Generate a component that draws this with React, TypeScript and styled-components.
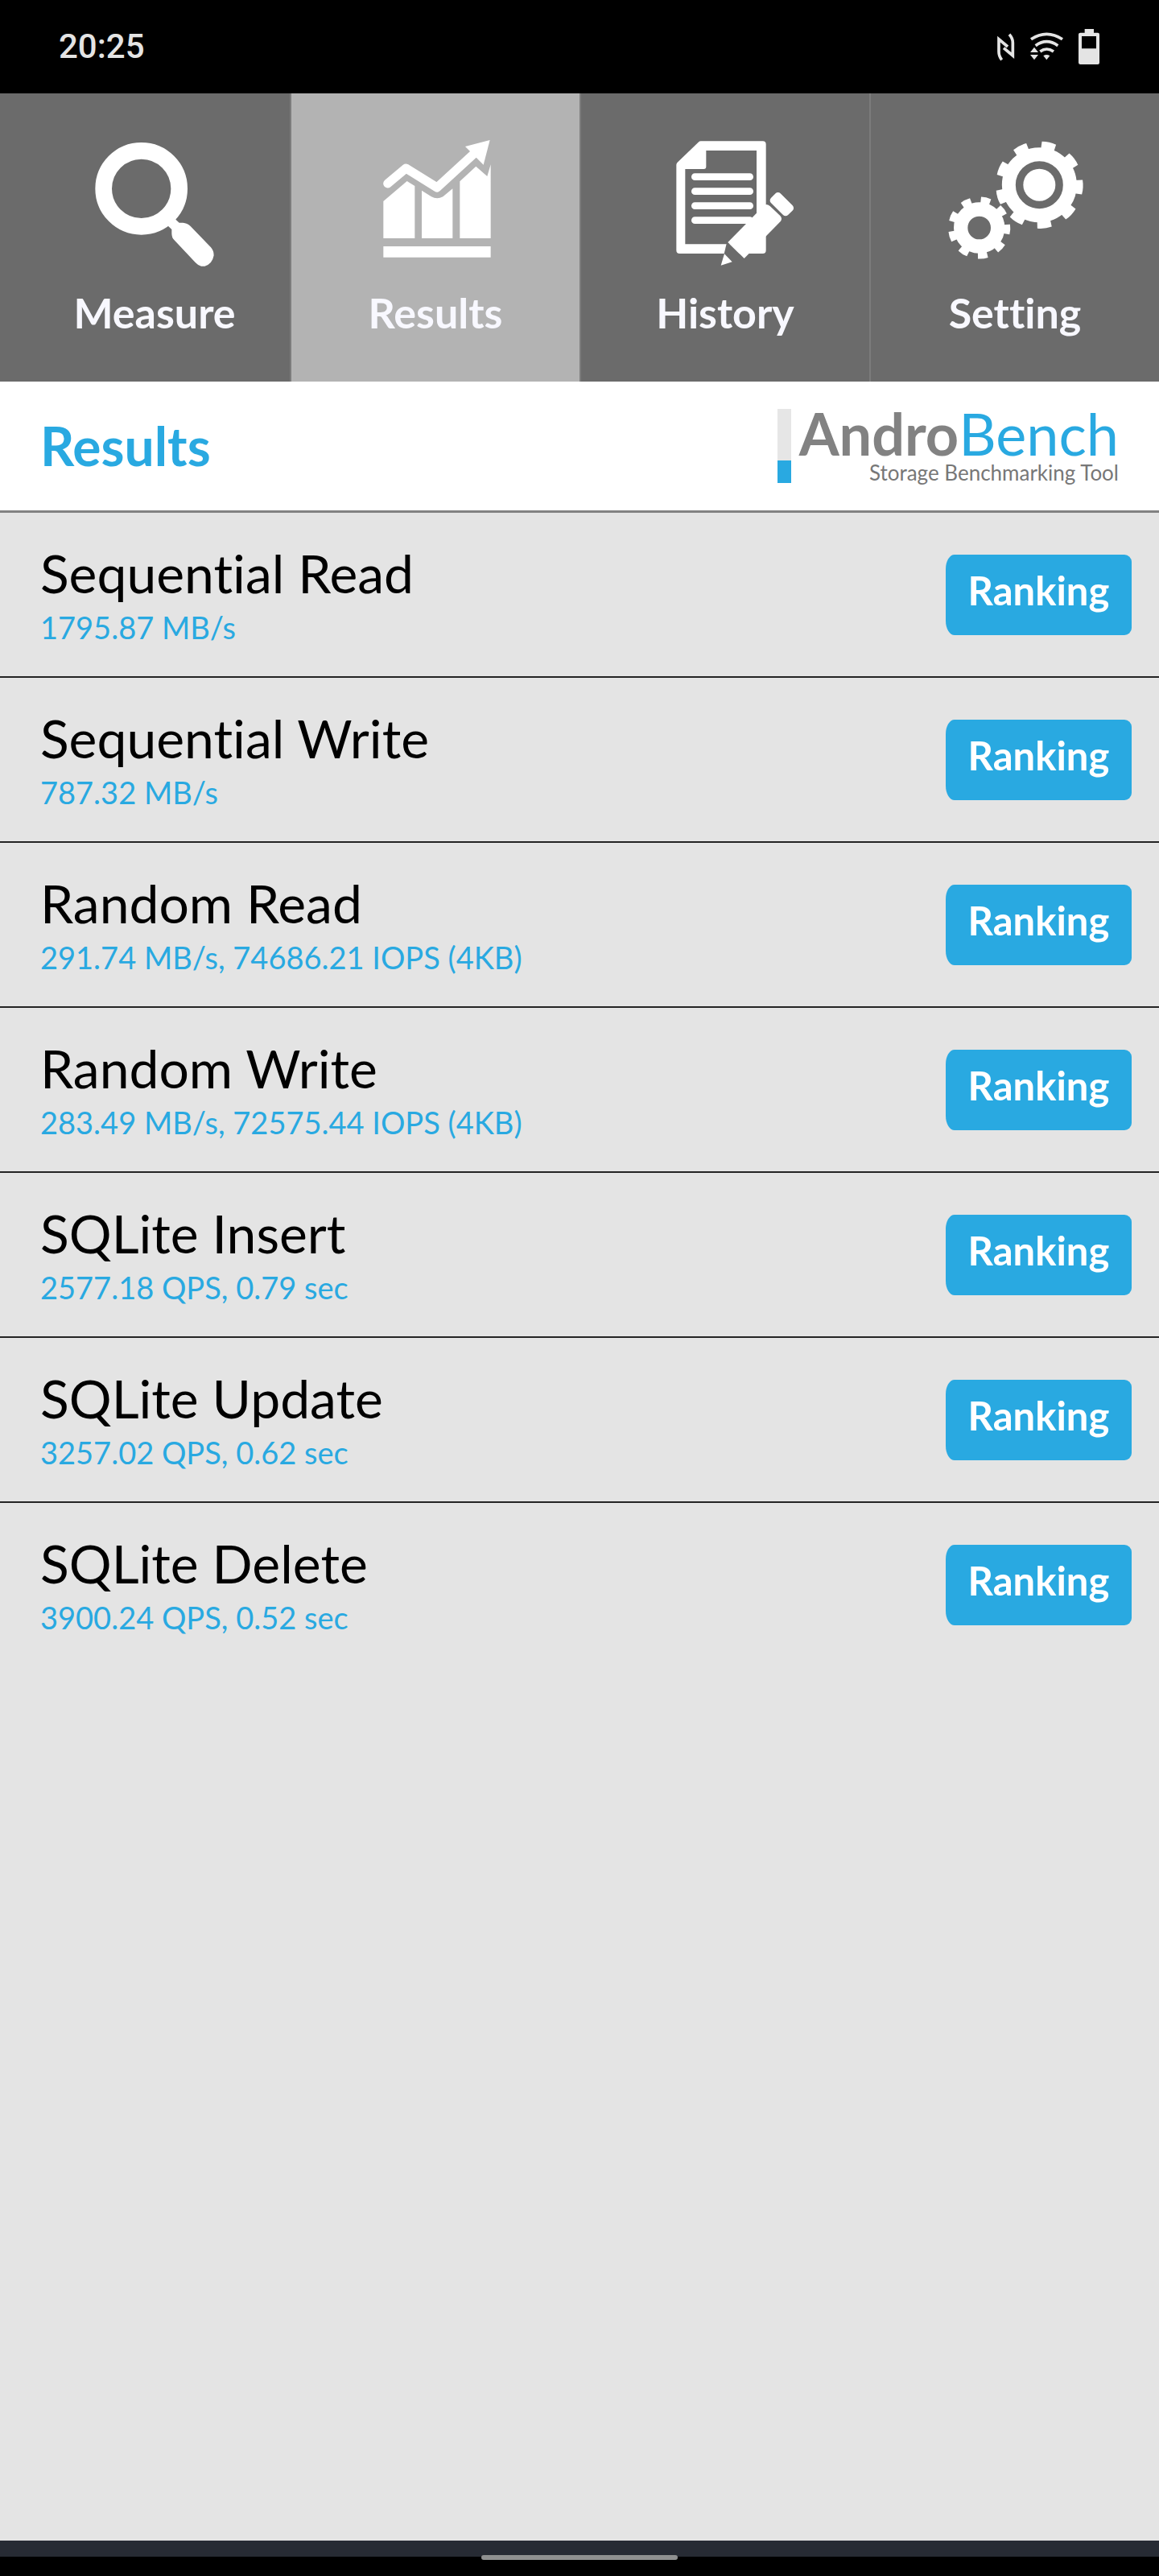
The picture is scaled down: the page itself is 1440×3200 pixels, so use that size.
import React from "react";
import styled, { createGlobalStyle } from "styled-components";

const color = {
  accent: "#29a9e1",
  tab: "#6b6b6b",
  tabActive: "#b3b3b3",
  tabEdge: "#7c7c7c",
  tabLabel: "#f8f8ff",
  surface: "#e4e4e4",
  divider: "#242424",
  brandGray: "#828282",
  status: "#e4e4e4",
};

const sans = `Lato, "Open Sans", "Liberation Sans", sans-serif`;

const GlobalStyle = createGlobalStyle`
  *, *::before, *::after { box-sizing: border-box; }
  body { margin: 0; background: #000; font-family: ${sans}; }
  h1, p, ul { margin: 0; padding: 0; }
  ul { list-style: none; }
`;

const Screen = styled.div`
  display: flex;
  flex-direction: column;
  min-height: 100vh;
  font-variant-ligatures: none;
`;

const StatusBar = styled.div`
  display: flex;
  align-items: center;
  justify-content: space-between;
  height: 116px;
  padding: 0 73px;
  background: #000;
  color: ${color.status};
`;

const Clock = styled.time`
  font-family: Roboto, sans-serif;
  font-size: 42px;
  font-weight: 500;
  line-height: 48px;
`;

const StatusIcons = styled.div`
  display: flex;
  gap: 17px;
  color: ${color.status};
`;

const Glyph = styled.svg<{ $width: number }>`
  display: block;
  width: ${(p) => p.$width}px;
  height: 44px;
`;

const Tabs = styled.nav`
  display: grid;
  grid-template-columns: repeat(4, 1fr);
  height: 358px;
`;

const Tab = styled.button<{ $active?: boolean }>`
  display: flex;
  flex-direction: column;
  align-items: center;
  padding: 54px 0 0;
  border: 0;
  border-left: 2px solid ${color.tabEdge};
  background: ${(p) => (p.$active ? color.tabActive : color.tab)};
  color: ${color.tabLabel};
  font-family: ${sans};
  font-size: 52px;
  font-weight: 700;
  line-height: 64px;
  font-variant-ligatures: none;
  cursor: pointer;

  &:first-child { padding-left: 24px; border-left: 0; }
`;

const TabIcon = styled.svg`
  display: block;
  width: 180px;
  height: 170px;
  margin-bottom: 16px;
  fill: #fff;
`;

const Header = styled.header`
  display: flex;
  align-items: center;
  justify-content: space-between;
  height: 163px;
  padding: 0 50px;
  border-bottom: 3px solid ${color.brandGray};
  background: #fff;
`;

const Title = styled.h1`
  color: ${color.accent};
  font-size: 66px;
  font-weight: 700;
  line-height: 80px;
`;

const Brand = styled.div`
  display: flex;
  align-items: center;
  gap: 10px;
`;

const BrandBar = styled.span`
  width: 17px;
  height: 92px;
  background: linear-gradient(#e6e6e6 64px, ${color.accent} 64px);
`;

const BrandText = styled.div`
  display: flex;
  flex-direction: column;
  align-items: flex-end;
`;

const BrandName = styled.p`
  color: ${color.accent};
  font-size: 72px;
  line-height: 66px;

  strong { color: ${color.brandGray}; font-weight: 700; }
`;

const BrandTag = styled.p`
  color: #777;
  font-size: 26px;
  line-height: 32px;
`;

const Results = styled.main`
  flex: 1;
  background: ${color.surface};
`;

const Row = styled.li`
  display: flex;
  align-items: center;
  justify-content: space-between;
  height: 205px;
  padding: 0 34px 0 50px;
  border-bottom: 2px solid ${color.divider};

  &:last-child { border-bottom-color: transparent; }
`;

const Metric = styled.p`
  color: #000;
  font-size: 66px;
  line-height: 80px;
`;

const Value = styled.p`
  color: ${color.accent};
  font-size: 38px;
  line-height: 54px;
`;

const RankingButton = styled.button`
  width: 231px;
  height: 100px;
  padding: 0 0 12px;
  border: 0;
  border-radius: 11px 9px 9px 11px / 18px 9px 9px 18px;
  background: ${color.accent};
  color: #fff;
  font-family: ${sans};
  font-size: 49px;
  font-weight: 700;
  line-height: 60px;
  cursor: pointer;
`;

const GestureBar = styled.footer`
  display: flex;
  justify-content: center;
  height: 44px;
  padding-top: 18px;
  background: linear-gradient(#272b34 20px, #000 20px);
`;

const GestureHandle = styled.span`
  width: 244px;
  height: 6px;
  border-radius: 3px;
  background: #8f9090;
`;

const NfcIcon = () => (
  <Glyph $width={24} viewBox="471 105 72 132" fill="none" stroke="currentColor" strokeWidth="11" aria-hidden>
    <path d="M491 220Q480 207 480 190V143L513 171" />
    <path d="M519 125Q532 139 532 156V204L498 176" />
  </Glyph>
);

const WifiIcon = () => (
  <Glyph $width={43} viewBox="594 105 129 132" fill="currentColor" aria-hidden>
    <g fill="none" stroke="currentColor" strokeWidth="11">
      <path d="M600 143Q658 105 717 143" />
      <path d="M617 167Q658 137 700 167" />
      <path d="M634 189Q658 171 684 189" />
    </g>
    <path d="M646 205Q658 197 670 205L658 220Z" />
    <path d="M597 192L612 173L627 192Z" />
    <path d="M597 201H627L612 220Z" />
  </Glyph>
);

const BatteryIcon = () => (
  <Glyph $width={28} viewBox="777 105 84 132" fill="currentColor" fillRule="evenodd" aria-hidden>
    <path d="M803 105H837V119H852Q858 119 858 125V230Q858 237 852 237H787Q780 237 780 230V125Q780 119 787 119H803ZM792 132V178H846V132Z" />
  </Glyph>
);

const MeasureIcon = () => (
  <TabIcon viewBox="306 510 540 510" aria-hidden>
    <circle cx="527" cy="703" r="141" fill="none" stroke="#fff" strokeWidth="62" />
    <path d="M610 830L655 790V818L668 830H682Q698 831 710 843L786 922Q797 934 797 952Q791 985 763 992H750Q739 990 728 978L649 894Q640 885 640 870V855L625 841Z" />
  </TabIcon>
);

const ResultsIcon = () => (
  <TabIcon viewBox="270 180 540 510" aria-hidden>
    <path d="M362 354L430 297L546 369L690 237" fill="none" stroke="#fff" strokeWidth="33" strokeLinecap="round" strokeLinejoin="round" />
    <path d="M651 216L743 192L719 284Z" />
    <path d="M346 420L434 345L463 363V558H346Z" />
    <path d="M489 380L525 403Q546 415 568 403L604 373V558H489Z" />
    <path d="M631 346L691 290L733 327L746 283V558H631Z" />
    <path d="M346 588H746V629H346Z" />
  </TabIcon>
);

const HistoryIcon = () => (
  <TabIcon viewBox="270 180 540 510" aria-hidden>
    <path
      fillRule="evenodd"
      d="M450 196H680Q692 196 692 208V603Q692 615 680 615H370Q358 615 358 603V284Q358 279 362 275L440 200Q444 196 450 196ZM469 231V291Q469 300 460 300H391V580H657V231Z"
    />
    <path d="M427 329H632M427 383H632M427 437H632M427 491H632" stroke="#fff" strokeWidth="26" strokeLinecap="round" />
    <path d="M547 570L611 633L566 648L536 616Z" fill={color.tab} />
    <path d="M550 573L657 464L692 432Q700 432 707 438L745 474Q754 484 747 494L611 633Z" />
    <path d="M537 616L566 646L524 659Z" />
    <rect x="706" y="406" width="90" height="50" rx="13" transform="rotate(45 751 431)" />
  </TabIcon>
);

const toothAngles = Array.from({ length: 9 }, (_, i) => 13 + i * 40);

const SettingIcon = () => (
  <TabIcon viewBox="270 510 540 510" aria-hidden>
    <g transform="translate(631 689)">
      <circle r="114" fill="none" stroke="#fff" strokeWidth="51" />
      <circle r="60" />
      {toothAngles.map((a) => (
        <path key={a} d="M-24 -128L-27 -160Q0 -166 27 -160L24 -128Z" transform={`rotate(${a})`} />
      ))}
    </g>
    <g transform="translate(407 849)">
      <circle r="69" fill="none" stroke="#fff" strokeWidth="52" />
      {toothAngles.map((a) => (
        <path key={a} d="M-16 -88L-19 -114Q0 -118 19 -114L16 -88Z" transform={`rotate(${a})`} />
      ))}
    </g>
  </TabIcon>
);

const tabs = [
  { label: "Measure", Icon: MeasureIcon },
  { label: "Results", Icon: ResultsIcon },
  { label: "History", Icon: HistoryIcon },
  { label: "Setting", Icon: SettingIcon },
];

const results = [
  { name: "Sequential Read", value: "1795.87 MB/s" },
  { name: "Sequential Write", value: "787.32 MB/s" },
  { name: "Random Read", value: "291.74 MB/s, 74686.21 IOPS (4KB)" },
  { name: "Random Write", value: "283.49 MB/s, 72575.44 IOPS (4KB)" },
  { name: "SQLite Insert", value: "2577.18 QPS, 0.79 sec" },
  { name: "SQLite Update", value: "3257.02 QPS, 0.62 sec" },
  { name: "SQLite Delete", value: "3900.24 QPS, 0.52 sec" },
];

export default function App() {
  const [active, setActive] = React.useState("Results");

  return (
    <>
      <GlobalStyle />
      <Screen>
        <StatusBar>
          <Clock>20:25</Clock>
          <StatusIcons>
            <NfcIcon />
            <WifiIcon />
            <BatteryIcon />
          </StatusIcons>
        </StatusBar>
        <Tabs>
          {tabs.map(({ label, Icon }) => (
            <Tab key={label} type="button" $active={label === active} onClick={() => setActive(label)}>
              <Icon />
              {label}
            </Tab>
          ))}
        </Tabs>
        <Header>
          <Title>Results</Title>
          <Brand>
            <BrandBar />
            <BrandText>
              <BrandName>
                <strong>Andro</strong>Bench
              </BrandName>
              <BrandTag>Storage Benchmarking Tool</BrandTag>
            </BrandText>
          </Brand>
        </Header>
        <Results>
          <ul>
            {results.map(({ name, value }) => (
              <Row key={name}>
                <div>
                  <Metric>{name}</Metric>
                  <Value>{value}</Value>
                </div>
                <RankingButton type="button">Ranking</RankingButton>
              </Row>
            ))}
          </ul>
        </Results>
        <GestureBar>
          <GestureHandle />
        </GestureBar>
      </Screen>
    </>
  );
}
